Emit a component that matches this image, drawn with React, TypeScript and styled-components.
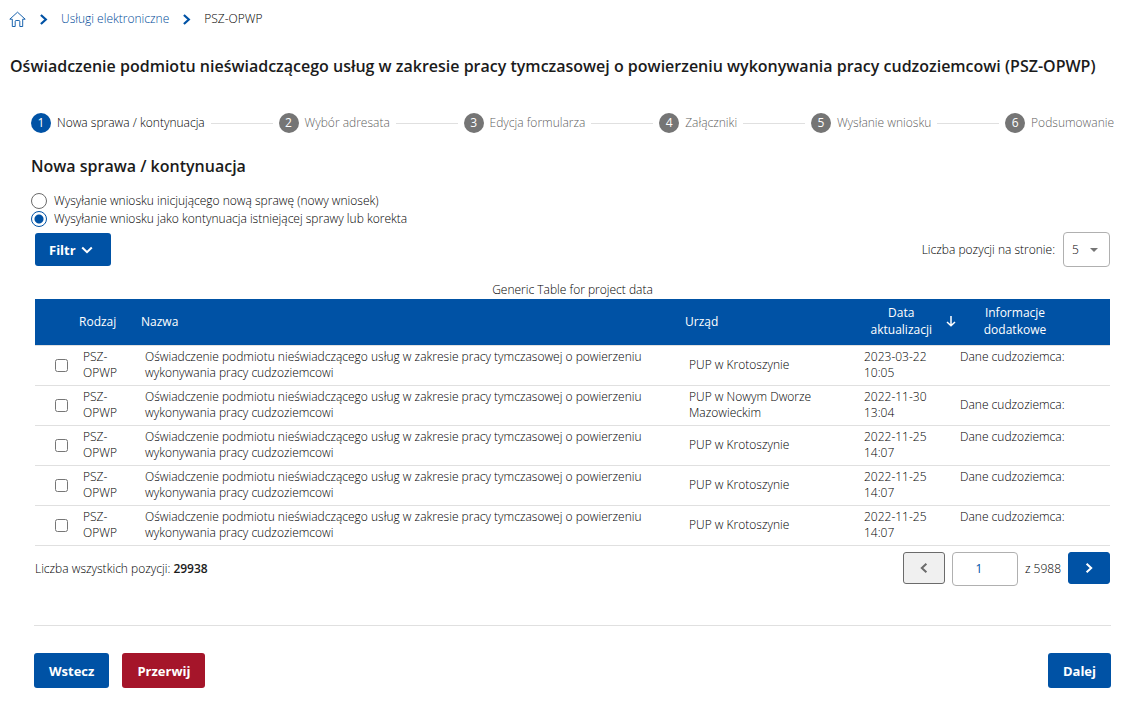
import React, { Fragment, useState } from "react";
import styled, { createGlobalStyle } from "styled-components";

const BLUE = "#0052a5";
const RED = "#a5152a";
const LINE = "#e0e0e0";
const GREY = "#757575";

const GlobalStyle = createGlobalStyle`
  *, *::before, *::after { box-sizing: border-box; }
  body {
    margin: 0;
    background: #fff;
    color: #000;
    font: 300 12px/18px "Open Sans", "Noto Sans", sans-serif;
  }
  button, input, select { font: inherit; color: inherit; }
`;

const Page = styled.div`
  display: flex;
  flex-direction: column;
  padding: 10px 0 19px;
`;

const Breadcrumbs = styled.nav`
  display: flex;
  align-items: center;
  height: 18px;
  padding: 0 9px;
  gap: 11px;
  svg { display: block; }
`;

const HomeLink = styled.a`
  display: block;
  color: ${BLUE};
`;

const CrumbLink = styled.a`
  color: #004a98;
  text-decoration: none;
`;

const Title = styled.h1`
  margin: 26px 10px 0;
  color: #1b1b1b;
  font-size: 16px;
  line-height: 24px;
  font-weight: 600;
`;

const Stepper = styled.ol`
  display: flex;
  align-items: center;
  gap: 6px;
  margin: 35px 32px 0 31px;
  padding: 0;
  list-style: none;
`;

const Step = styled.li<{ $active: boolean }>`
  display: flex;
  align-items: center;
  gap: 6px;
  white-space: nowrap;
  line-height: 20px;
  color: ${(p) => (p.$active ? "#000" : "#5f5f5f")};
`;

const StepNumber = styled.span<{ $active: boolean }>`
  width: 20px;
  height: 20px;
  border-radius: 50%;
  text-align: center;
  font-weight: 400;
  color: #fff;
  background: ${(p) => (p.$active ? BLUE : GREY)};
`;

const StepLine = styled.li`
  flex: 1;
  height: 1px;
  background: ${LINE};
`;

const Subtitle = styled.h2`
  margin: 21px 31px 0;
  color: #1b1b1b;
  font-size: 16px;
  line-height: 24px;
  font-weight: 600;
`;

const Choices = styled.fieldset`
  display: flex;
  flex-direction: column;
  align-items: flex-start;
  margin: 14px 31px 0;
  padding: 0;
  border: 0;
`;

const Choice = styled.label`
  display: flex;
  align-items: center;
  gap: 7px;
  line-height: 18px;
`;

const Radio = styled.input`
  appearance: none;
  width: 16px;
  height: 16px;
  margin: 0;
  border: 1px solid #6b6b6b;
  border-radius: 50%;
  background: #fff;
  &:checked {
    border-color: ${BLUE};
    background: radial-gradient(circle, ${BLUE} 4px, #fff 5px);
  }
`;

const Toolbar = styled.div`
  display: flex;
  align-items: center;
  justify-content: space-between;
  margin: 4px 36px 0 35px;
`;

const Button = styled.button<{ $danger?: boolean; $short?: boolean }>`
  display: inline-flex;
  align-items: center;
  gap: 5px;
  height: ${(p) => (p.$short ? 33 : 35)}px;
  padding: ${(p) => (p.$short ? "0 18px 0 14px" : "0 15px")};
  border: 0;
  border-radius: 3px;
  background: ${(p) => (p.$danger ? RED : BLUE)};
  color: #fff;
  font-size: 13px;
  font-weight: 700;
`;

const PageSize = styled.label`
  display: flex;
  align-items: center;
  gap: 8px;
`;

const SelectBox = styled.span`
  display: grid;
  align-items: center;
  width: 47px;
  height: 35px;
  & > * { grid-area: 1 / 1; }
  svg {
    justify-self: end;
    margin-right: 12px;
    pointer-events: none;
  }
`;

const Select = styled.select`
  appearance: none;
  width: 100%;
  height: 100%;
  padding: 0 8px;
  border: 1px solid #b0b0b0;
  border-radius: 4px;
  background: #fff;
`;

const TableArea = styled.div`
  margin: 14px 36px 0 35px;
`;

const Table = styled.table`
  width: 100%;
  table-layout: fixed;
  border-collapse: separate;
  border-spacing: 0;
  caption { line-height: 18px; }
`;

const Col = styled.col<{ $w?: number }>`
  width: ${(p) => (p.$w ? `${p.$w}px` : "auto")};
`;

const HeadCell = styled.th<{ $center?: boolean }>`
  height: 47px;
  padding: 0 ${(p) => (p.$center ? 0 : 4)}px 2px;
  border-bottom: 1px solid ${LINE};
  background: ${BLUE};
  background-clip: padding-box;
  color: #fff;
  font-weight: 400;
  line-height: 17px;
  text-align: ${(p) => (p.$center ? "center" : "left")};
`;

const SortHeader = styled.span`
  display: flex;
  align-items: center;
  justify-content: flex-end;
  gap: 14px;
`;

const Cell = styled.td<{ $pad?: number; $clip?: boolean }>`
  height: 40px;
  padding: 3px ${(p) => p.$pad ?? 8}px 4px;
  border-bottom: 1px solid ${LINE};
  line-height: 16px;
  vertical-align: middle;
  ${(p) => p.$clip && "white-space: nowrap; overflow: hidden;"}
`;

const Info = styled.div<{ $tall: boolean }>`
  height: ${(p) => (p.$tall ? 32 : 16)}px;
  overflow: hidden;
`;

const Check = styled.input`
  display: block;
  width: 13px;
  height: 13px;
  margin: 0 0 0 12px;
`;

const Total = styled.strong`
  color: #1b1b1b;
  font-weight: 600;
`;

const TableFooter = styled.div`
  display: flex;
  align-items: center;
  justify-content: space-between;
  margin-top: 6px;
`;

const Pager = styled.div`
  display: flex;
  align-items: flex-start;
  gap: 7px;
  line-height: 34px;
`;

const PagerButton = styled.button`
  display: grid;
  place-items: center;
  width: 42px;
  height: 32px;
  padding: 0;
  border: 1px solid ${BLUE};
  border-radius: 3px;
  background: ${BLUE};
  color: #fff;
  &:disabled {
    border-color: #6b6b6b;
    background: #f0f0f0;
    color: #6b6b6b;
  }
`;

const PageInput = styled.input`
  width: 66px;
  height: 34px;
  padding: 0 12px 0 0;
  border: 1px solid #b0b0b0;
  border-radius: 4px;
  color: ${BLUE};
  font-weight: 400;
  text-align: center;
`;

const Actions = styled.footer`
  display: flex;
  gap: 13px;
  margin: 39px 35px 0 34px;
  padding-top: 27px;
  border-top: 1px solid ${LINE};
  & > :last-child { margin-left: auto; }
`;

const Chevron = ({ dir = "right", size = 10 }: { dir?: "left" | "right" | "down"; size?: number }) => {
  const d = { left: "M7 1.5 3.2 5 7 8.5", right: "M3 1.5 6.8 5 3 8.5", down: "M1 3 5 6.8 9 3" }[dir];
  return (
    <svg width={size} height={size} viewBox="0 0 10 10" fill="none" stroke="currentColor" strokeWidth="1.7" aria-hidden="true">
      <path d={d} />
    </svg>
  );
};

const HomeIcon = () => (
  <svg width="17" height="18" viewBox="0 0 17 18" fill="none" stroke="currentColor" strokeWidth="0.9" aria-hidden="true">
    <path d="M.8 9.2 8.5 2.2 16.2 9.2H13.7V16.5H10.8V11.4Q10.8 10.5 9.9 10.5H7.1Q6.2 10.5 6.2 11.4V16.5H3.3V9.2Z" strokeLinejoin="round" />
  </svg>
);

const SortArrow = () => (
  <svg width="10" height="12" viewBox="0 0 10 12" fill="none" stroke="currentColor" strokeWidth="1.5" aria-hidden="true">
    <path d="M5 1V10.5M1 7 5 10.7 9 7" />
  </svg>
);

const steps = [
  "Nowa sprawa / kontynuacja",
  "Wybór adresata",
  "Edycja formularza",
  "Załączniki",
  "Wysłanie wniosku",
  "Podsumowanie",
];

const NAME = "Oświadczenie podmiotu nieświadczącego usług w zakresie pracy tymczasowej o powierzeniu wykonywania pracy cudzoziemcowi";

const rows = [
  { office: "PUP w Krotoszynie", date: "2023-03-22 10:05", tall: true },
  { office: "PUP w Nowym Dworze Mazowieckim", date: "2022-11-30 13:04", tall: false },
  { office: "PUP w Krotoszynie", date: "2022-11-25 14:07", tall: true },
  { office: "PUP w Krotoszynie", date: "2022-11-25 14:07", tall: true },
  { office: "PUP w Krotoszynie", date: "2022-11-25 14:07", tall: true },
];

export default function App() {
  const [mode, setMode] = useState("continue");
  return (
    <>
      <GlobalStyle />
      <Page>
        <Breadcrumbs aria-label="Ścieżka">
          <HomeLink href="#" aria-label="Strona główna"><HomeIcon /></HomeLink>
          <HomeLink as="span"><Chevron size={13} /></HomeLink>
          <CrumbLink href="#">Usługi elektroniczne</CrumbLink>
          <HomeLink as="span"><Chevron size={13} /></HomeLink>
          <span>PSZ-OPWP</span>
        </Breadcrumbs>

        <Title>
          Oświadczenie podmiotu nieświadczącego usług w zakresie pracy tymczasowej o powierzeniu wykonywania pracy
          cudzoziemcowi (PSZ-OPWP)
        </Title>

        <Stepper>
          {steps.map((label, i) => (
            <Fragment key={label}>
              {i > 0 && <StepLine aria-hidden="true" />}
              <Step $active={i === 0}>
                <StepNumber $active={i === 0}>{i + 1}</StepNumber>
                {label}
              </Step>
            </Fragment>
          ))}
        </Stepper>

        <Subtitle>Nowa sprawa / kontynuacja</Subtitle>

        <Choices aria-label="Rodzaj sprawy">
          <Choice>
            <Radio type="radio" name="mode" checked={mode === "new"} onChange={() => setMode("new")} />
            Wysyłanie wniosku inicjującego nową sprawę (nowy wniosek)
          </Choice>
          <Choice>
            <Radio type="radio" name="mode" checked={mode === "continue"} onChange={() => setMode("continue")} />
            Wysyłanie wniosku jako kontynuacja istniejącej sprawy lub korekta
          </Choice>
        </Choices>

        <Toolbar>
          <Button type="button" $short>Filtr <Chevron dir="down" size={12} /></Button>
          <PageSize>
            Liczba pozycji na stronie:
            <SelectBox>
              <Select defaultValue="5">
                <option>5</option>
                <option>10</option>
                <option>20</option>
              </Select>
              <svg width="8" height="4" viewBox="0 0 8 4" aria-hidden="true"><path d="M0 0H8L4 4Z" fill={GREY} /></svg>
            </SelectBox>
          </PageSize>
        </Toolbar>

        <TableArea>
          <Table>
            <caption>Generic Table for project data</caption>
            <colgroup>
              <Col $w={40} />
              <Col $w={62} />
              <Col />
              <Col $w={175} />
              <Col $w={100} />
              <Col $w={118} />
              <Col $w={36} />
            </colgroup>
            <thead>
              <tr>
                <HeadCell />
                <HeadCell scope="col">Rodzaj</HeadCell>
                <HeadCell scope="col">Nazwa</HeadCell>
                <HeadCell scope="col">Urząd</HeadCell>
                <HeadCell scope="col" $center>
                  <SortHeader><span>Data<br />aktualizacji</span><SortArrow /></SortHeader>
                </HeadCell>
                <HeadCell scope="col" $center>Informacje<br />dodatkowe</HeadCell>
                <HeadCell />
              </tr>
            </thead>
            <tbody>
              {rows.map((r, i) => (
                <tr key={i}>
                  <Cell><Check type="checkbox" aria-label={`Wybierz pozycję ${i + 1}`} /></Cell>
                  <Cell>PSZ-<br />OPWP</Cell>
                  <Cell>{NAME}</Cell>
                  <Cell>{r.office}</Cell>
                  <Cell>{r.date}</Cell>
                  <Cell $pad={4} $clip><Info $tall={r.tall}>Dane cudzoziemca:</Info></Cell>
                  <Cell />
                </tr>
              ))}
            </tbody>
          </Table>
          <TableFooter>
            <span>Liczba wszystkich pozycji: <Total>29938</Total></span>
            <Pager>
              <PagerButton type="button" disabled aria-label="Poprzednia strona"><Chevron dir="left" size={12} /></PagerButton>
              <PageInput type="text" defaultValue="1" aria-label="Numer strony" />
              <span>z 5988</span>
              <PagerButton type="button" aria-label="Następna strona"><Chevron size={12} /></PagerButton>
            </Pager>
          </TableFooter>
        </TableArea>

        <Actions>
          <Button type="button">Wstecz</Button>
          <Button type="button" $danger>Przerwij</Button>
          <Button type="button">Dalej</Button>
        </Actions>
      </Page>
    </>
  );
}
